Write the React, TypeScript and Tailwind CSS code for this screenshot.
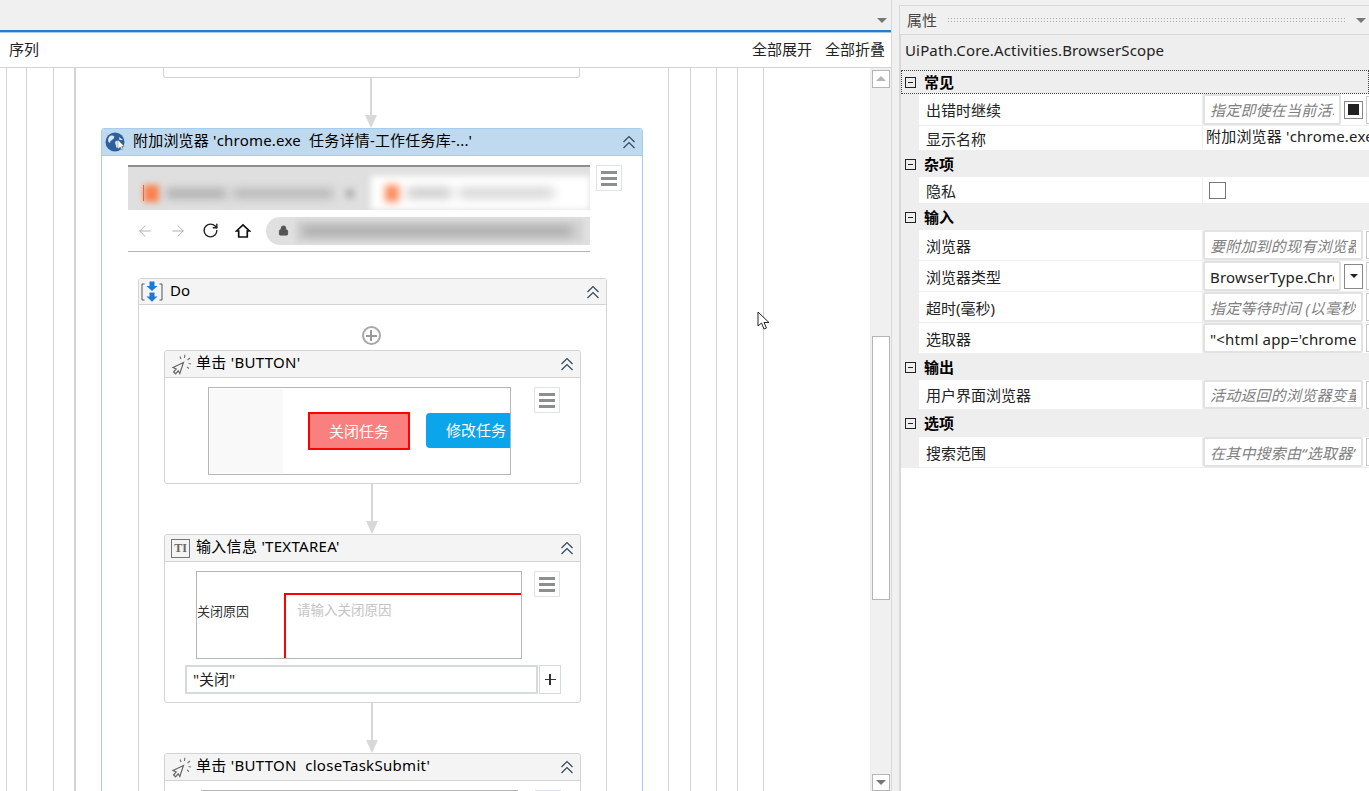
import React from "react";
import { ArrowLeft, ArrowRight, Lock, RotateCw } from "lucide-react";

const ActivityIconClick = () => (
  <svg width="22" height="22" viewBox="0 0 22 22" fill="none" stroke="#666" strokeWidth="1.2">
    <path d="M13.5 9.5 L3 14.5 L6.2 16 L3.6 19 L5.6 20.8 L8.2 17.8 L9.8 20.5 Z" />
    <path d="M11 6 L10 3.5 M14.5 5 L14.8 1.8 M17.5 7 L20 5 M18.5 10.5 L21 11 M17 14 L19 15.5" stroke="#777" />
  </svg>
);

const ActivityIconType = () => (
  <div className="w-[19px] h-[19px] border border-[#777] flex items-center justify-center text-[12px] font-bold text-[#666] font-['Liberation_Serif',serif] leading-none">
    TI
  </div>
);

const ActivityIconDo = () => (
  <svg width="24" height="22" viewBox="0 0 24 22" fill="none">
    <path d="M4.5 3 H2 V19 H4.5 M19.5 3 H22 V19 H19.5" stroke="#555" strokeWidth="1" />
    <path d="M9.5 0.5 H14.5 V5 H17.5 L12 10 L6.5 5 H9.5 Z" fill="#1f78d1" />
    <path d="M9.5 11.5 H14.5 V15.5 H17.5 L12 20.8 L6.5 15.5 H9.5 Z" fill="#1f78d1" />
  </svg>
);

const GlobeIcon = () => (
  <svg width="20" height="20" viewBox="0 0 20 20">
    <circle cx="10" cy="10" r="9.5" fill="#2f5f9e" />
    <path d="M5 4 C8 3 10 4 9 6 C8 8 5 8 5 11 C3 10 2 7 5 4 Z" fill="#dbe7f3" />
    <path d="M11 9 C14 8 16 10 15 13 C14 16 11 17 11 14 C11 12 9 11 11 9 Z" fill="#dbe7f3" />
    <path d="M14 5 L18 8 L14.500 8 Z" fill="#dbe7f3" />
    <path d="M13 8 L13 17 L15.200 15 L16.800 18 L18 17.400 L16.600 14.500 L19.200 14.200 Z" fill="#fff" stroke="#777" strokeWidth="0.5" />
  </svg>
);

const HomeIcon = () => (
  <svg width="16" height="16" viewBox="0 0 16 16" fill="none" stroke="#111" strokeWidth="1.7" className="ml-[16px]">
    <path d="M1.500 8 L8 1.800 L14.500 8 H12.300 V14 H3.700 V8 Z" strokeLinejoin="miter" />
  </svg>
);

const Collapse = () => (
  <svg width="14" height="14" viewBox="0 0 14 14" fill="none" stroke="#33475b" strokeWidth="1.2" className="ml-auto mr-[6px] shrink-0">
    <path d="M1.500 7 L7 1.500 L12.500 7 M1.500 13 L7 7.500 L12.500 13" />
  </svg>
);

const MenuBox = () => (
  <div className="w-[26px] h-[26px] bg-white border border-[#dde3ec] flex flex-col items-center justify-center gap-[3px]">
    <div className="w-4 h-[3px] bg-[#8e8e8e]" />
    <div className="w-4 h-[3px] bg-[#8e8e8e]" />
    <div className="w-4 h-[3px] bg-[#8e8e8e]" />
  </div>
);

// connector between two activities
const Arrow = ({ height }: { height: number }) => (
  <svg width="14" height={height} className="block mx-auto" viewBox={`0 0 14 ${height}`}>
    <rect x="6" y="0" width="2" height={height - 11} fill="#d8d8d8" />
    <path d={`M1 ${height - 13} H13 L7 ${height} Z`} fill="#d8d8d8" />
  </svg>
);

interface CardProps {
  title: string;
  icon: React.ReactNode;
  children?: React.ReactNode;
  className?: string;
}

const Card: React.FC<CardProps> = ({ title, icon, children, className }) => (
  <div className={`border border-[#d3d3d3] rounded-[3px] bg-white ${className ?? ""}`}>
    <div className="h-[27px] bg-[#f4f4f4] border-b border-[#d3d3d3] flex items-center rounded-t-[3px]">
      <div className="w-[31px] flex justify-center shrink-0">{icon}</div>
      <span className="text-[15px] tracking-[0.3px] text-black whitespace-pre pb-[3px]">{title}</span>
      <Collapse />
    </div>
    {children}
  </div>
);

const BrowserThumb = () => (
  <div className="w-[462px] h-[87px] border-t-2 border-b border-t-[#8f8f8f] border-b-[#b5b5b5] overflow-hidden">
    <div className="h-[43px] bg-[#dfdfdf] flex overflow-hidden">
      <div className="w-[243px] h-[34px] mt-[9px] bg-[#dfdfdf] flex items-center gap-[7px] pl-[15px]">
        <div className="w-[1px] h-[16px] bg-[#f0501e] -mr-[7px]" />
        <div className="w-[15px] h-[17px] bg-[#fb7f4c] blur-[3px]" />
        <div className="w-[60px] h-[9px] bg-[#aaaaaa] blur-[5px]" />
        <div className="w-[100px] h-[9px] bg-[#b4b4b4] blur-[5px]" />
        <div className="w-[8px] h-[9px] ml-[6px] bg-[#adadad] blur-[3px]" />
      </div>
      <div className="w-[219px] h-[34px] mt-[9px] bg-white flex items-center gap-[8px] pl-[14px] blur-[3px]">
        <div className="w-[14px] h-[17px] bg-[#fb8a5a] blur-[2px]" />
        <div className="w-[44px] h-[8px] bg-[#b8b8b8] blur-[4px]" />
        <div className="w-[95px] h-[8px] bg-[#c8c8c8] blur-[4px]" />
      </div>
    </div>
    <div className="h-[41px] bg-white flex items-center">
      <ArrowLeft size={18} strokeWidth={1.2} className="ml-[8px] text-[#a8a8a8]" />
      <ArrowRight size={18} strokeWidth={1.2} className="ml-[15px] text-[#a8a8a8]" />
      <RotateCw size={17} strokeWidth={2} className="ml-[15px] text-[#222]" />
      <HomeIcon />
      <div className="ml-[15px] w-[325px] h-[28px] bg-[#e0e0e0] rounded-l-[14px] flex items-center">
        <Lock size={11} fill="#555" className="ml-[12px] text-[#555]" />
        <div className="ml-[7px] w-[287px] h-[22px] bg-[#d4d4d4] flex items-center blur-[2px]">
          <div className="w-[270px] h-[8px] ml-[6px] bg-[#a0a0a0] blur-[5px]" />
        </div>
      </div>
    </div>
  </div>
);

const Canvas = () => (
  <div className="relative h-[723px] w-[870px] bg-white overflow-hidden">
    {/* enclosing sequences, cut off left and right of the visible part */}
    <div className="ml-[6px] w-[758px] h-full border-x border-[#d3d3d3]">
      <div className="ml-[19px] w-[712px] h-full border-x border-[#d3d3d3]">
        <div className="ml-[26px] w-[664px] h-full border-x border-[#d3d3d3]">
          <div className="ml-[20px] w-[617px] h-full border-x border-[#d3d3d3]">
            <div className="w-[594px] h-full border-x border-[#d3d3d3] flex flex-col items-start">
              <div className="ml-[87px] w-[417px] h-[10px] border border-t-0 border-[#d3d3d3] rounded-b-[3px] bg-white shrink-0" />
              <div className="ml-[288px] shrink-0">
                <Arrow height={50} />
              </div>
              <div className="ml-[25px] w-[542px] border border-[#a5cdf0] rounded-[3px] bg-white h-[700px] shrink-0">
                <div className="h-[27px] bg-[#bfd9ee] border-b border-[#a5cdf0] flex items-center rounded-t-[3px]">
                  <div className="ml-[3px] w-[20px] mr-[8px]">
                    <GlobeIcon />
                  </div>
                  <span className="text-[15px] tracking-[0.2px] text-black whitespace-pre pb-[3px]">附加浏览器 'chrome.exe  任务详情-工作任务库-...'</span>
                  <Collapse />
                </div>
                <div className="flex pl-[26px] pt-[9px] items-start">
                  <BrowserThumb />
                  <div className="ml-[6px]">
                    <MenuBox />
                  </div>
                </div>
                <div className="ml-[36px] mt-[26px] w-[469px] border border-[#d3d3d3] rounded-[3px]">
                  <div className="h-[26px] bg-[#f4f4f4] border-b border-[#d3d3d3] flex items-center">
                    <div className="w-[28px] ml-[-1px] flex justify-center">
                      <ActivityIconDo />
                    </div>
                    <span className="ml-[4px] text-[15px] text-black pb-[2px]">Do</span>
                    <Collapse />
                  </div>
                  <div className="pt-[21px] flex flex-col items-start">
                    <div className="w-full flex justify-center pr-[3px]">
                      <div className="w-[19px] h-[19px] rounded-full border-2 border-[#a9a9a9] flex items-center justify-center relative">
                        <div className="absolute w-[11px] h-[2px] bg-[#999]" />
                        <div className="absolute w-[2px] h-[11px] bg-[#999]" />
                      </div>
                    </div>
                    <Card title="单击 'BUTTON'" icon={<ActivityIconClick />} className="ml-[25px] mt-[5px] w-[417px]">
                      <div className="h-[105px] flex items-start pt-[9px] pl-[43px]">
                        <div className="w-[303px] h-[88px] border border-[#b5b5b5] flex overflow-hidden">
                          <div className="w-[73px] h-[84px] mt-[1px] ml-[1px] bg-[#f9f9f9] shrink-0" />
                          <div className="ml-[25px] mt-[24px] w-[102px] h-[38px] border-2 border-[#ff0000] bg-[#fa8080] text-white text-[15px] flex items-center justify-center shrink-0">
                            关闭任务
                          </div>
                          <div className="ml-[16px] mt-[25px] w-[84px] h-[35px] rounded-l-[4px] bg-[#0ba5ec] text-white text-[15px] flex items-center pl-[20px] shrink-0 whitespace-nowrap">
                            修改任务
                          </div>
                        </div>
                        <div className="ml-[23px]">
                          <MenuBox />
                        </div>
                      </div>
                    </Card>
                    <div className="ml-[226px]">
                      <Arrow height={50} />
                    </div>
                    <Card title="输入信息 'TEXTAREA'" icon={<ActivityIconType />} className="ml-[25px] w-[417px]">
                      <div className="h-[140px] pt-[9px]">
                        <div className="flex items-start pl-[31px]">
                          <div className="w-[326px] h-[88px] border border-[#b5b5b5] flex overflow-hidden">
                            <div className="w-[87px] pt-[30px] text-[13px] text-[#333] whitespace-nowrap">关闭原因</div>
                            <div className="mt-[21px] flex-1 border-l-2 border-t-2 border-[#ff0000] pl-[11px] pt-[5px] text-[13.500px] text-[#c4c4c4]">
                              请输入关闭原因
                            </div>
                          </div>
                          <div className="ml-[12px]">
                            <MenuBox />
                          </div>
                        </div>
                        <div className="flex ml-[20px] mt-[6px] h-[29px]">
                          <div className="w-[353px] border-2 border-[#d5dae0] flex items-center pl-[6px] text-[15px] text-[#222]">"关闭"</div>
                          <div className="w-[22px] ml-[1px] border border-[#d5dae0] relative flex items-center justify-center">
                            <div className="absolute w-[11px] h-[1.5px] bg-[#333]" />
                            <div className="absolute w-[1.5px] h-[11px] bg-[#333]" />
                          </div>
                        </div>
                      </div>
                    </Card>
                    <div className="ml-[226px]">
                      <Arrow height={50} />
                    </div>
                    <Card title="单击 'BUTTON  closeTaskSubmit'" icon={<ActivityIconClick />} className="ml-[25px] w-[417px]">
                      <div className="flex items-start pt-[9px] pl-[36px] h-[60px]">
                        <div className="w-[317px] h-[40px] border-t border-x border-[#b5b5b5]" />
                        <div className="ml-[17px]">
                          <MenuBox />
                        </div>
                      </div>
                    </Card>
                  </div>
                </div>
              </div>
            </div>
          </div>
        </div>
      </div>
    </div>
    {/* mouse pointer */}
    <svg className="absolute left-[757px] top-[243px]" width="14" height="20" viewBox="0 0 14 20">
      <path d="M1 1 V15 L4.500 12 L7 18 L9.500 17 L7 11.500 L12 11.500 Z" fill="#fff" stroke="#222" strokeWidth="1" />
    </svg>
  </div>
);

const ScrollBar = () => (
  <div className="w-[21px] h-[723px] bg-[#f0f0f0] flex flex-col items-center pt-[2px]">
    <div className="w-[18px] h-[18px] bg-white border border-[#b5b5b5] flex items-center justify-center">
      <div className="w-0 h-0 border-x-[5px] border-x-transparent border-b-[5px] border-b-[#b5b5b5]" />
    </div>
    <div className="w-[18px] h-[265px] mt-[248px] bg-white border border-[#b5b5b5]" />
    <div className="w-[18px] h-[17px] mt-[174px] bg-white border border-[#b5b5b5] flex items-center justify-center">
      <div className="w-0 h-0 border-x-[5px] border-x-transparent border-t-[5px] border-t-[#777]" />
    </div>
  </div>
);

const Expander = () => (
  <div className="w-[11px] h-[11px] border border-[#222] flex items-center justify-center shrink-0">
    <div className="w-[5px] h-[1px] bg-[#222]" />
  </div>
);

const Category = ({ title, height, focused }: { title: string; height: number; focused?: boolean }) => (
  <div
    className={`flex items-center pl-[4px] bg-[#eeeeee] ${focused ? "outline-1 outline-dotted outline-[#444] -outline-offset-1" : ""}`}
    style={{ height }}
  >
    <Expander />
    <span className="ml-[8px] text-[15px] font-bold text-black">{title}</span>
  </div>
);

const Row: React.FC<{ label: string; height: number; children?: React.ReactNode }> = ({ label, height, children }) => (
  <div className="flex bg-[#eeeeee]" style={{ height }}>
    <div className="ml-[18px] w-[283px] bg-white border-b border-[#eeeeee] flex items-center pl-[7px] pt-[2px] text-[15px] text-[#222] shrink-0">
      {label}
    </div>
    <div className="flex-1 ml-[1px] bg-white border-b border-[#eeeeee] flex items-center overflow-hidden min-w-0">{children}</div>
  </div>
);

const ValueBox = ({ text, hint, width }: { text: string; hint?: boolean; width: number }) => (
  <div
    className="h-full border-2 border-[#e2e2e2] rounded-[2px] px-[5px] pt-[2px] flex items-center shrink-0"
    style={{ width }}
  >
    <div className={`w-full overflow-hidden whitespace-nowrap text-[15px] tracking-[0.2px] ${hint ? "italic text-[#808080]" : "text-[#222]"}`}>
      {text}
    </div>
  </div>
);

const SmallBtn = () => <div className="ml-[3px] w-[6px] h-[28px] border border-[#c8c8c8] shrink-0" />;

const PropertyPanel = () => (
  <div className="flex-1 h-[786px] mt-[5px] ml-[7px] border-l border-t border-[#d8d8d8] min-w-0">
    <div className="h-[28px] flex items-center pl-[7px]">
      <span className="text-[15px] text-[#444]">属性</span>
      <div className="ml-[10px] w-[399px] h-[7px] bg-[radial-gradient(#aaaaaa_1px,transparent_1px)] bg-[length:3px_3px]" />
      <div className="ml-[10px] w-0 h-0 border-x-[5px] border-x-transparent border-t-[5px] border-t-[#777]" />
    </div>
    <div className="border-l border-t border-[#d8d8d8] h-[757px] bg-white">
      <div className="h-[35px] bg-[#eeeeee] flex items-center pl-[4px] pb-[5px] text-[15px] tracking-[0.15px] text-[#222] whitespace-nowrap">
        UiPath.Core.Activities.BrowserScope
      </div>
      <Category title="常见" height={24} focused />
      <Row label="出错时继续" height={32}>
        <ValueBox text="指定即使在当前活动失败" hint width={138} />
        <div className="ml-[3px] w-[19px] h-[18px] border border-[#888] flex items-center justify-center shrink-0">
          <div className="w-[11px] h-[11px] bg-[#222]" />
        </div>
        <SmallBtn />
      </Row>
      <Row label="显示名称" height={25}>
        <span className="ml-[3px] mb-[4px] text-[15px] tracking-[0.2px] text-[#222] whitespace-nowrap">附加浏览器 'chrome.exe</span>
      </Row>
      <Category title="杂项" height={26} />
      <Row label="隐私" height={27}>
        <div className="ml-[6px] w-[17px] h-[17px] border border-[#777]" />
      </Row>
      <Category title="输入" height={26} />
      <Row label="浏览器" height={31}>
        <ValueBox text="要附加到的现有浏览器变量" hint width={160} />
        <SmallBtn />
      </Row>
      <Row label="浏览器类型" height={31}>
        <ValueBox text="BrowserType.Chrome" width={138} />
        <div className="ml-[3px] w-[19px] h-[25px] border border-[#888] flex items-center justify-center shrink-0">
          <div className="w-0 h-0 border-x-[4px] border-x-transparent border-t-[4px] border-t-[#222]" />
        </div>
        <SmallBtn />
      </Row>
      <Row label="超时(毫秒)" height={31}>
        <ValueBox text="指定等待时间 (以毫秒为单位)" hint width={160} />
        <SmallBtn />
      </Row>
      <Row label="选取器" height={31}>
        <ValueBox text={"\"<html app='chrome.exe'"} width={160} />
        <SmallBtn />
      </Row>
      <Category title="输出" height={26} />
      <Row label="用户界面浏览器" height={30}>
        <ValueBox text="活动返回的浏览器变量" hint width={160} />
        <SmallBtn />
      </Row>
      <Category title="选项" height={27} />
      <Row label="搜索范围" height={31}>
        <ValueBox text="在其中搜索由“选取器”属性" hint width={160} />
        <SmallBtn />
      </Row>
    </div>
  </div>
);

export default function App() {
  return (
    <div className="w-[1369px] h-[791px] bg-[#f0f0f0] flex overflow-hidden font-['Noto_Sans','Noto_Sans_CJK_SC',sans-serif]">
      <div className="w-[892px] shrink-0 border-r border-[#d8d8d8]">
        <div className="h-[30px] flex items-end justify-end pb-[7px] pr-[4px]">
          <div className="w-0 h-0 border-x-[5px] border-x-transparent border-t-[5px] border-t-[#777]" />
        </div>
        <div className="h-[3px] bg-[#2a7bd0] border-b border-[#a8cbe8]" />
        <div className="h-[35px] bg-white border-b border-[#d3d3d3] flex items-center justify-between pl-[9px] pr-[6px] pb-[2px] text-[15px] text-[#222]">
          <span>序列</span>
          <div className="flex gap-[13px]">
            <span>全部展开</span>
            <span>全部折叠</span>
          </div>
        </div>
        <div className="flex">
          <Canvas />
          <ScrollBar />
        </div>
      </div>
      <PropertyPanel />
    </div>
  );
}
